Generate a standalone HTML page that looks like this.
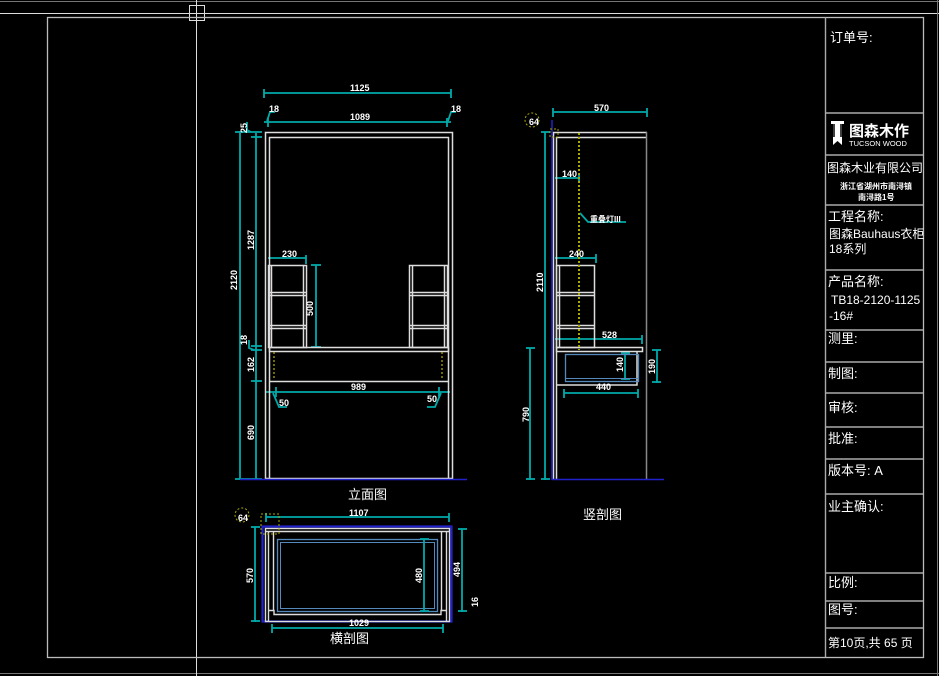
<!DOCTYPE html>
<html><head><meta charset="utf-8"><style>
html,body{margin:0;padding:0;background:#000;}
svg{display:block}
text{font-family:"Liberation Sans","Noto Sans CJK SC",sans-serif;}
</style></head><body>
<svg width="939" height="676" viewBox="0 0 939 676" xmlns="http://www.w3.org/2000/svg">
<rect width="939" height="676" fill="#000"/>
<line x1="0" y1="1.5" x2="939" y2="1.5" stroke="#777" stroke-width="1"/>
<line x1="0" y1="13.5" x2="939" y2="13.5" stroke="#ddd" stroke-width="1"/>
<line x1="0" y1="673.5" x2="939" y2="673.5" stroke="#777" stroke-width="1"/>
<line x1="196.5" y1="0" x2="196.5" y2="676" stroke="#ddd" stroke-width="1"/>
<rect x="189.5" y="5.5" width="15" height="15" fill="none" stroke="#ddd"/>
<line x1="937.5" y1="0" x2="937.5" y2="676" stroke="#777"/>
<rect x="47.5" y="17.5" width="876" height="640" fill="none" stroke="#bbb" stroke-width="1.3"/>
<g stroke="#aaa" stroke-width="1.4" fill="none">
<line x1="825.5" y1="17" x2="825.5" y2="657"/>
<line x1="825" y1="113" x2="923" y2="113"/>
<line x1="825" y1="155" x2="923" y2="155"/>
<line x1="825" y1="205" x2="923" y2="205"/>
<line x1="825" y1="270" x2="923" y2="270"/>
<line x1="825" y1="330" x2="923" y2="330"/>
<line x1="825" y1="362" x2="923" y2="362"/>
<line x1="825" y1="393" x2="923" y2="393"/>
<line x1="825" y1="427" x2="923" y2="427"/>
<line x1="825" y1="459" x2="923" y2="459"/>
<line x1="825" y1="494" x2="923" y2="494"/>
<line x1="825" y1="573" x2="923" y2="573"/>
<line x1="825" y1="601" x2="923" y2="601"/>
<line x1="825" y1="628" x2="923" y2="628"/>
</g>
<g fill="#fff" font-size="13">
<text x="830" y="42">订单号:</text>
<text x="827" y="172" font-size="12">图森木业有限公司</text>
<text x="840" y="189" font-size="8" font-weight="bold">浙江省湖州市南浔镇</text>
<text x="858" y="200" font-size="8" font-weight="bold">南浔路1号</text>
<text x="828" y="221">工程名称:</text>
<text x="829" y="238" font-size="12">图森Bauhaus衣柜</text>
<text x="829" y="253" font-size="12">18系列</text>
<text x="828" y="286">产品名称:</text>
<text x="831" y="304" font-size="12" font-family="Liberation Mono">TB18-2120-1125</text>
<text x="829" y="320" font-size="12" font-family="Liberation Mono">-16#</text>
<text x="828" y="343">测里:</text>
<text x="828" y="378">制图:</text>
<text x="828" y="412">审核:</text>
<text x="828" y="443">批准:</text>
<text x="828" y="475">版本号: A</text>
<text x="828" y="511">业主确认:</text>
<text x="828" y="587">比例:</text>
<text x="828" y="614">图号:</text>
<text x="828" y="647" font-size="12">第10页,共 65 页</text>
</g>
<path d="M831 121h13v3h-2v21l-4.5-4-4.5 4v-21h-2z" fill="#fff"/>
<path d="M834 124v13M841 124v13" stroke="#000" stroke-width="1.5"/>
<text x="849" y="136" fill="#fff" font-size="15" font-weight="bold">图森木作</text>
<text x="849" y="146" fill="#fff" font-size="7.5">TUCSON WOOD</text>

<g stroke="#0aa" stroke-width="1.8" fill="none">
<line x1="264" y1="93" x2="451" y2="93"/>
<line x1="264" y1="89" x2="264" y2="98"/><line x1="451" y1="89" x2="451" y2="98"/>
<line x1="264" y1="122" x2="451" y2="122"/>
<line x1="268" y1="118" x2="268" y2="127"/><line x1="447" y1="118" x2="447" y2="127"/>
<path d="M267 121l3-9h5M448 121l3-9h5"/>
<line x1="240" y1="131" x2="240" y2="479"/>
<line x1="256" y1="133" x2="256" y2="479"/>
<line x1="235" y1="132" x2="262" y2="132"/><line x1="251" y1="137" x2="262" y2="137"/>
<line x1="251" y1="346" x2="262" y2="346"/><line x1="251" y1="350" x2="262" y2="350"/>
<line x1="251" y1="381" x2="262" y2="381"/>
<line x1="235" y1="479" x2="262" y2="479"/>
<line x1="268" y1="258" x2="306" y2="258"/><line x1="306" y1="255" x2="306" y2="264"/>
<line x1="316" y1="265" x2="316" y2="347"/><line x1="311" y1="265" x2="321" y2="265"/><line x1="311" y1="347" x2="321" y2="347"/>
<line x1="266" y1="392" x2="450" y2="392"/>
<line x1="276" y1="387" x2="276" y2="397"/><line x1="439" y1="387" x2="439" y2="397"/>
<path d="M273 393l6 14h8M441 393l-6 14h-8"/>
<path d="M247 122v8l4 2M249 340v8l5 2"/>
</g>
<g stroke="#ddd" stroke-width="1.5" fill="none">
<rect x="265.5" y="132.5" width="187" height="346"/>
<line x1="269.5" y1="137" x2="269.5" y2="478"/>
<line x1="448.5" y1="137" x2="448.5" y2="478"/>
<line x1="269" y1="137.5" x2="449" y2="137.5"/>
<rect x="268.5" y="265.5" width="38" height="82"/>
<line x1="271.5" y1="266" x2="271.5" y2="347"/><line x1="303.5" y1="266" x2="303.5" y2="347"/>
<line x1="269" y1="292.5" x2="306" y2="292.5"/><line x1="269" y1="295.5" x2="306" y2="295.5"/>
<line x1="269" y1="325.5" x2="306" y2="325.5"/><line x1="269" y1="328.5" x2="306" y2="328.5"/>
<rect x="409.5" y="265.5" width="38" height="82"/>
<line x1="412.5" y1="266" x2="412.5" y2="347"/><line x1="444.5" y1="266" x2="444.5" y2="347"/>
<line x1="410" y1="292.5" x2="447" y2="292.5"/><line x1="410" y1="295.5" x2="447" y2="295.5"/>
<line x1="410" y1="325.5" x2="447" y2="325.5"/><line x1="410" y1="328.5" x2="447" y2="328.5"/>
<rect x="269.5" y="347.5" width="179" height="4"/>
<line x1="269" y1="381.5" x2="449" y2="381.5"/>
</g>
<g stroke="#aa0" stroke-dasharray="2 2" stroke-width="1.3"><line x1="274" y1="352" x2="274" y2="380"/><line x1="442" y1="352" x2="442" y2="380"/></g>
<line x1="240" y1="479.5" x2="467" y2="479.5" stroke="#22c" stroke-width="1.5"/>
<g fill="#fff" font-size="9" font-weight="bold" font-family="Liberation Sans Narrow,Liberation Sans,sans-serif">
<text x="350" y="91">1125</text><text x="350" y="120">1089</text>
<text x="269" y="112">18</text><text x="451" y="112">18</text>
<text x="282" y="257">230</text><text x="351" y="390">989</text>
<text x="279" y="406">50</text><text x="427" y="402">50</text>
<text transform="translate(237,290) rotate(-90)">2120</text>
<text transform="translate(254,250) rotate(-90)">1287</text>
<text transform="translate(254,372) rotate(-90)">162</text>
<text transform="translate(254,440) rotate(-90)">690</text>
<text transform="translate(313,316) rotate(-90)">500</text>
<text transform="translate(247,133) rotate(-90)">25</text>
<text transform="translate(247,345) rotate(-90)">18</text>
</g>
<text x="348" y="499" fill="#fff" font-size="13">立面图</text>

<g stroke="#0aa" stroke-width="1.8" fill="none">
<line x1="553" y1="112" x2="647" y2="112"/><line x1="553" y1="108" x2="553" y2="117"/><line x1="647" y1="108" x2="647" y2="117"/>
<line x1="545" y1="132" x2="545" y2="480"/><line x1="541" y1="132" x2="550" y2="132"/><line x1="541" y1="479" x2="550" y2="479"/>
<line x1="530" y1="348" x2="530" y2="480"/><line x1="526" y1="348" x2="535" y2="348"/><line x1="526" y1="479" x2="535" y2="479"/>
<line x1="555" y1="178" x2="579" y2="178"/><line x1="579" y1="174" x2="579" y2="183"/>
<path d="M580 213l8 9h38"/>
<line x1="555" y1="258" x2="596" y2="258"/><line x1="596" y1="254" x2="596" y2="263"/>
<line x1="555" y1="339" x2="642" y2="339"/><line x1="642" y1="335" x2="642" y2="344"/>
<line x1="625" y1="353" x2="625" y2="380"/><line x1="621" y1="353" x2="630" y2="353"/><line x1="621" y1="379" x2="630" y2="379"/>
<line x1="657" y1="350" x2="657" y2="383"/><line x1="652" y1="350" x2="661" y2="350"/><line x1="652" y1="382" x2="661" y2="382"/>
<line x1="564" y1="393" x2="638" y2="393"/><line x1="564" y1="389" x2="564" y2="398"/><line x1="638" y1="389" x2="638" y2="398"/>
</g>
<g stroke="#ddd" stroke-width="1.5" fill="none">
<line x1="553.5" y1="132" x2="553.5" y2="479"/><line x1="556.5" y1="137" x2="556.5" y2="479"/>
<line x1="553" y1="132.5" x2="647" y2="132.5"/><line x1="556" y1="137.5" x2="647" y2="137.5"/>
<rect x="556.5" y="265.5" width="38" height="82"/>
<line x1="559.5" y1="266" x2="559.5" y2="347"/>
<line x1="557" y1="292.5" x2="594" y2="292.5"/><line x1="557" y1="295.5" x2="594" y2="295.5"/>
<line x1="557" y1="325.5" x2="594" y2="325.5"/><line x1="557" y1="328.5" x2="594" y2="328.5"/>
<rect x="556.5" y="347.5" width="86" height="4"/>
<path d="M637 352v33h-80"/>
</g>
<line x1="646.5" y1="132" x2="646.5" y2="479" stroke="#888" stroke-width="1.5"/>
<rect x="565.5" y="354.5" width="73" height="27" fill="none" stroke="#58b" stroke-width="1.3"/>
<line x1="566" y1="378.5" x2="638" y2="378.5" stroke="#58b"/>
<line x1="552" y1="120" x2="552" y2="480" stroke="#22c" stroke-width="1.5"/>
<line x1="552" y1="479.5" x2="664" y2="479.5" stroke="#22c" stroke-width="1.5"/>
<line x1="579" y1="133" x2="579" y2="350" stroke="#aa0" stroke-width="2" stroke-dasharray="2 2"/>
<g fill="none" stroke="#aa0" stroke-dasharray="2 2"><circle cx="532" cy="120" r="7"/><rect x="550" y="129" width="8" height="8"/></g>
<g fill="#fff" font-size="9" font-weight="bold" font-family="Liberation Sans Narrow,Liberation Sans,sans-serif">
<text x="594" y="111">570</text><text x="562" y="177">140</text><text x="569" y="257">240</text>
<text x="602" y="338">528</text><text x="596" y="390">440</text>
<text x="590" y="222" font-size="8">重叠灯III</text>
<text transform="translate(543,292) rotate(-90)">2110</text>
<text transform="translate(529,422) rotate(-90)">790</text>
<text transform="translate(623,372) rotate(-90)">140</text>
<text transform="translate(655,374) rotate(-90)">190</text>
<text x="529" y="125">64</text>
</g>
<text x="583" y="519" fill="#fff" font-size="13">竖剖图</text>

<rect x="262.5" y="526.5" width="189" height="95" fill="none" stroke="#22c" stroke-width="2.2"/>
<g stroke="#ddd" stroke-width="1.4" fill="none">
<rect x="265.5" y="528.5" width="184" height="93"/>
<line x1="268.5" y1="531" x2="268.5" y2="621"/><line x1="446.5" y1="531" x2="446.5" y2="621"/>
<line x1="266" y1="531.5" x2="449" y2="531.5"/>
<line x1="273.5" y1="532" x2="273.5" y2="610"/><line x1="441.5" y1="532" x2="441.5" y2="610"/>
<path d="M269 610.5h5v4h167v-4h5"/>
</g>
<rect x="277.5" y="539.5" width="160" height="72" fill="none" stroke="#58b" stroke-width="1.3"/>
<rect x="280.5" y="542.5" width="154" height="66" fill="none" stroke="#58b"/>
<g stroke="#0aa" stroke-width="1.8" fill="none">
<line x1="266" y1="517" x2="449" y2="517"/><line x1="266" y1="513" x2="266" y2="522"/><line x1="449" y1="513" x2="449" y2="522"/>
<line x1="255" y1="527" x2="255" y2="622"/><line x1="251" y1="527" x2="260" y2="527"/><line x1="251" y1="621" x2="260" y2="621"/>
<line x1="424" y1="539" x2="424" y2="612"/><line x1="420" y1="539" x2="429" y2="539"/><line x1="420" y1="611" x2="429" y2="611"/>
<line x1="462" y1="529" x2="462" y2="612"/><line x1="458" y1="529" x2="467" y2="529"/><line x1="458" y1="611" x2="467" y2="611"/>
<line x1="272" y1="628" x2="443" y2="628"/><line x1="272" y1="624" x2="272" y2="633"/><line x1="443" y1="624" x2="443" y2="633"/>
</g>
<g fill="none" stroke="#aa0" stroke-dasharray="2 2"><circle cx="242" cy="515" r="7"/><rect x="261" y="514" width="18" height="20"/></g>
<g fill="#fff" font-size="9" font-weight="bold" font-family="Liberation Sans Narrow,Liberation Sans,sans-serif">
<text x="349" y="516">1107</text><text x="349" y="626">1029</text>
<text transform="translate(253,583) rotate(-90)">570</text>
<text transform="translate(422,583) rotate(-90)">480</text>
<text transform="translate(460,577) rotate(-90)">494</text>
<text transform="translate(478,607) rotate(-90)">16</text>
<text x="238" y="521">64</text>
</g>
<text x="330" y="643" fill="#fff" font-size="13">横剖图</text>
</svg>
</body></html>
